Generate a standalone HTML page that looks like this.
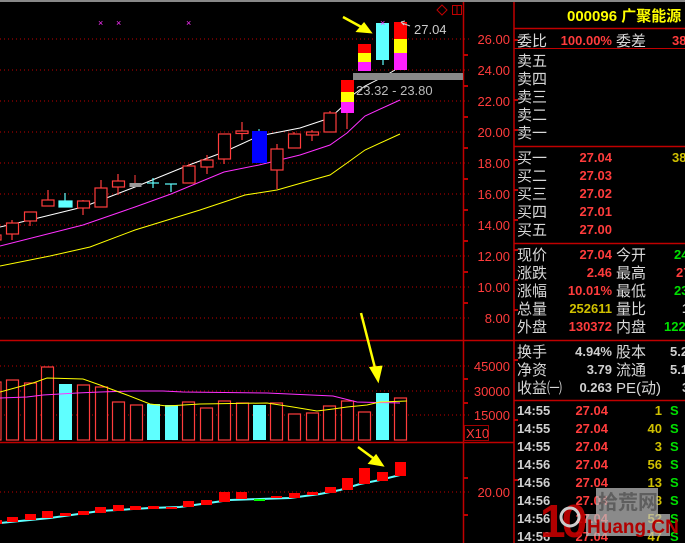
<!DOCTYPE html>
<html><head><meta charset="utf-8"><style>
html,body{margin:0;padding:0;background:#000;width:685px;height:543px;overflow:hidden}
svg{display:block}
.ax{font:13px "Liberation Sans",sans-serif;fill:#ff3c3c;text-anchor:end}
.l{font:15px "Liberation Sans","Noto Sans CJK SC",sans-serif;fill:#d8d8d8}
.n{font:bold 13px "Liberation Sans",sans-serif;text-anchor:end}
.t{font:bold 13px "Liberation Sans",sans-serif;fill:#d0d0d0}
</style></head><body>
<svg width="685" height="543" viewBox="0 0 685 543" xmlns="http://www.w3.org/2000/svg">
<rect width="685" height="543" fill="#000"/>
<line x1="0" y1="1" x2="685" y2="1" stroke="#888" stroke-width="2"/>
<!-- grid -->
<g stroke="#c00000" stroke-width="1" stroke-dasharray="1,3">
<line x1="0" y1="39" x2="470" y2="39"/><line x1="0" y1="70" x2="470" y2="70"/><line x1="0" y1="101" x2="470" y2="101"/><line x1="0" y1="132" x2="470" y2="132"/><line x1="0" y1="163" x2="470" y2="163"/><line x1="0" y1="194" x2="470" y2="194"/><line x1="0" y1="225" x2="470" y2="225"/><line x1="0" y1="256" x2="470" y2="256"/><line x1="0" y1="287" x2="470" y2="287"/><line x1="0" y1="318" x2="470" y2="318"/>
<line x1="0" y1="366" x2="470" y2="366"/><line x1="0" y1="391" x2="470" y2="391"/><line x1="0" y1="415" x2="470" y2="415"/>
<line x1="0" y1="492" x2="470" y2="492"/>
</g>
<!-- borders -->
<g stroke="#c00000" stroke-width="1.5">
<line x1="463.5" y1="2" x2="463.5" y2="543"/>
<line x1="514" y1="2" x2="514" y2="543"/>
<line x1="0" y1="340.5" x2="685" y2="340.5"/>
<line x1="0" y1="442.5" x2="514" y2="442.5"/>
<line x1="514" y1="28.5" x2="685" y2="28.5"/>
<line x1="514" y1="146.5" x2="685" y2="146.5"/>
<line x1="514" y1="243.5" x2="685" y2="243.5"/>
<line x1="514" y1="400.5" x2="685" y2="400.5"/>
</g>
<g stroke="#c00000">
<line x1="514" y1="48.5" x2="685" y2="48.5"/>
</g>
<g stroke="#c00000" stroke-width="2">
<line x1="463" y1="55" x2="468" y2="55"/><line x1="463" y1="86" x2="468" y2="86"/><line x1="463" y1="117" x2="468" y2="117"/><line x1="463" y1="148" x2="468" y2="148"/><line x1="463" y1="179" x2="468" y2="179"/><line x1="463" y1="210" x2="468" y2="210"/><line x1="463" y1="241" x2="468" y2="241"/><line x1="463" y1="272" x2="468" y2="272"/><line x1="463" y1="303" x2="468" y2="303"/>
<line x1="463" y1="379" x2="468" y2="379"/><line x1="463" y1="403" x2="468" y2="403"/>
<line x1="463" y1="478" x2="468" y2="478"/><line x1="463" y1="515" x2="468" y2="515"/>
<line x1="514" y1="40" x2="518" y2="40"/><line x1="514" y1="100" x2="518" y2="100"/><line x1="514" y1="130" x2="518" y2="130"/><line x1="514" y1="160" x2="518" y2="160"/><line x1="514" y1="190" x2="518" y2="190"/><line x1="514" y1="220" x2="518" y2="220"/><line x1="514" y1="250" x2="518" y2="250"/><line x1="514" y1="280" x2="518" y2="280"/><line x1="514" y1="310" x2="518" y2="310"/><line x1="514" y1="360" x2="518" y2="360"/><line x1="514" y1="420" x2="518" y2="420"/><line x1="514" y1="480" x2="518" y2="480"/>
</g>
<!-- axis labels -->
<g class="ax">
<text x="510" y="44">26.00</text><text x="510" y="75">24.00</text><text x="510" y="106">22.00</text><text x="510" y="137">20.00</text><text x="510" y="168">18.00</text><text x="510" y="199">16.00</text><text x="510" y="230">14.00</text><text x="510" y="261">12.00</text><text x="510" y="292">10.00</text><text x="510" y="323">8.00</text>
<text x="510" y="371">45000</text><text x="510" y="396">30000</text><text x="510" y="420">15000</text>
<text x="510" y="497">20.00</text>
</g>
<rect x="464.5" y="425.5" width="24" height="15" fill="none" stroke="#a00000"/>
<text x="466" y="438" style="font:13px 'Liberation Sans',sans-serif;fill:#ff3c3c">X10</text>
<!-- top icons -->
<path d="M442 5 L447 10 L442 15 L437 10 Z" fill="none" stroke="#c00000"/>
<rect x="452.5" y="5.5" width="9" height="9" fill="none" stroke="#c00000"/><line x1="457" y1="5" x2="457" y2="15" stroke="#c00000"/>
<!-- MAs -->
<polyline fill="none" stroke="#fff" points="0,227 30,220 83,207 135,187 189,165 224,152 259,136 300,128 318,122 330,118 342,107 350,97 365,86 383,77 395,70"/>
<polyline fill="none" stroke="#ff30ff" points="0,246 83,225 135,207 171,194 224,172 259,165 300,155 330,145 347,133 365,116 400,100"/>
<polyline fill="none" stroke="#ffff00" points="0,266 50,256 90,247 135,230 200,210 245,195 277,190 312,180 330,175 347,163 365,150 400,134"/>
<!-- candles -->
<g stroke="#ff3c3c" stroke-width="1.2" fill="#000">
<rect x="-5" y="235" width="6" height="5"/>
<line x1="12" y1="220" x2="12" y2="240"/><rect x="6.5" y="223" width="12" height="11"/>
<line x1="30" y1="212" x2="30" y2="226"/><rect x="24.5" y="212" width="12" height="9"/>
<line x1="48" y1="190" x2="48" y2="206"/><rect x="42" y="200" width="12" height="6"/>
<line x1="83" y1="200" x2="83" y2="215"/><rect x="77.5" y="201" width="12" height="7"/>
<line x1="101" y1="180" x2="101" y2="207"/><rect x="95" y="188" width="12" height="19"/>
<line x1="118" y1="174" x2="118" y2="195"/><rect x="112.5" y="181" width="12" height="6"/>
<line x1="189" y1="164" x2="189" y2="183"/><rect x="183" y="166" width="12" height="17"/>
<line x1="207" y1="155" x2="207" y2="174"/><rect x="201" y="160" width="12" height="7"/>
<line x1="224" y1="134" x2="224" y2="164"/><rect x="218.5" y="134" width="12" height="25"/>
<line x1="242" y1="122" x2="242" y2="140"/><rect x="236" y="131" width="12" height="2.5"/>
<line x1="277" y1="144" x2="277" y2="189"/><rect x="271" y="149" width="12" height="21"/>
<line x1="294" y1="132" x2="294" y2="148"/><rect x="288.5" y="134" width="12" height="14"/>
<line x1="312" y1="130" x2="312" y2="141"/><rect x="306.5" y="132" width="12" height="3"/>
<line x1="330" y1="111" x2="330" y2="132"/><rect x="324" y="113" width="12" height="19"/>
<line x1="347" y1="113" x2="347" y2="129"/>
</g>
<g stroke="#5fffff" stroke-width="1.2">
<line x1="65" y1="193" x2="65" y2="201"/><rect x="59" y="201" width="13" height="6" fill="#5fffff"/>
<line x1="147" y1="183" x2="159" y2="183"/><line x1="153" y1="178" x2="153" y2="188"/>
<line x1="165" y1="184" x2="177" y2="184"/><line x1="171" y1="184" x2="171" y2="192"/>
<line x1="383" y1="60" x2="383" y2="65"/>
</g>
<line x1="135" y1="175" x2="135" y2="183" stroke="#ff3c3c"/>
<rect x="129.5" y="183" width="12" height="4" fill="#999"/>
<rect x="252" y="131" width="15" height="32" fill="#0000ff"/>
<line x1="259" y1="129" x2="259" y2="131" stroke="#5fffff"/>
<!-- special candles -->
<rect x="341" y="80" width="13" height="12" fill="#ff0000"/><rect x="341" y="92" width="13" height="10" fill="#ffff00"/><rect x="341" y="102" width="13" height="11" fill="#ff20ff"/>
<rect x="358" y="44" width="13" height="9" fill="#ff0000"/><rect x="358" y="53" width="13" height="9" fill="#ffff00"/><rect x="358" y="62" width="13" height="9" fill="#ff20ff"/>
<rect x="376" y="23" width="13" height="37" fill="#5fffff"/>
<rect x="394" y="22" width="13" height="17" fill="#ff0000"/><rect x="394" y="39" width="13" height="14" fill="#ffff00"/><rect x="394" y="53" width="13" height="17" fill="#ff20ff"/>
<rect x="353" y="73" width="110" height="7" fill="#888"/>
<text x="356" y="95" style="font:13px 'Liberation Sans',sans-serif;fill:#bbb">23.32 - 23.80</text>
<text x="414" y="34" style="font:13px 'Liberation Sans',sans-serif;fill:#ccc">27.04</text>
<path d="M401 22 L404 25 M401 22 L405 21 M402 23 L410 26" stroke="#ccc" fill="none"/>
<g fill="#ff30ff" font-family="Liberation Sans" font-size="9"><text x="98" y="26">×</text><text x="116" y="26">×</text><text x="186" y="26">×</text><text x="380" y="26">×</text></g>
<!-- arrows -->
<g stroke="#ffff00" stroke-width="2.5" fill="#ffff00">
<line x1="343" y1="17" x2="365" y2="29"/><path d="M370 32 L358 31 L364 24 Z"/>
<line x1="361" y1="313" x2="376" y2="372"/><path d="M378 380 L371 368 L381 367 Z"/>
<line x1="358" y1="447" x2="377" y2="461"/><path d="M382 465 L370 463 L376 456 Z"/>
</g>
<!-- volume bars -->
<g stroke="#ff3c3c" stroke-width="1.2" fill="#000">
<rect x="-6" y="382" width="7" height="58"/>
<rect x="6.5" y="380" width="12" height="60"/><rect x="24.5" y="383" width="12" height="57"/><rect x="41.5" y="367" width="12" height="73"/>
<rect x="77.5" y="385" width="12" height="55"/><rect x="95.5" y="387" width="12" height="53"/><rect x="112.5" y="402" width="12" height="38"/><rect x="130.5" y="405" width="12" height="35"/>
<rect x="182.5" y="402" width="12" height="38"/><rect x="200.5" y="408" width="12" height="32"/><rect x="218.5" y="401" width="12" height="39"/><rect x="236.5" y="403" width="12" height="37"/>
<rect x="270.5" y="403" width="12" height="37"/><rect x="288.5" y="414" width="12" height="26"/><rect x="306.5" y="413" width="12" height="27"/><rect x="323.5" y="406" width="12" height="34"/><rect x="341.5" y="401" width="12" height="39"/><rect x="358.5" y="412" width="12" height="28"/><rect x="394.5" y="398" width="12" height="42"/>
</g>
<g fill="#5fffff"><rect x="59" y="384" width="13" height="56"/><rect x="147" y="404" width="13" height="36"/><rect x="165" y="405" width="13" height="35"/><rect x="253" y="405" width="13" height="35"/><rect x="376" y="393" width="13" height="47"/></g>
<polyline fill="none" stroke="#ff30ff" points="0,398 27,397 43,395 77,393 100,392 133,391 163,391 183,392 267,393 333,396 357,402 400,403"/>
<polyline fill="none" stroke="#ffff00" points="0,392 33,383 47,378 83,379 100,385 127,395 150,404 167,406 200,404 267,403 293,407 317,411 333,409 347,407 367,405 380,402 407,401"/>
<!-- lower panel -->
<polyline fill="none" stroke="#5fffff" stroke-width="2" points="0,523 50,518 100,511 150,508 180,507 230,500 260,499 290,498 320,494 340,490 360,484 380,480 400,475"/>
<g fill="#ff0000">
<rect x="-4" y="520" width="6" height="4"/><rect x="7" y="517" width="11" height="5"/><rect x="25" y="514" width="11" height="6"/><rect x="42" y="511" width="11" height="7"/><rect x="60" y="513" width="11" height="3"/><rect x="78" y="511" width="11" height="4"/><rect x="95" y="507" width="11" height="6"/><rect x="113" y="505" width="11" height="6"/><rect x="130" y="506" width="11" height="4"/><rect x="148" y="506" width="11" height="3"/><rect x="166" y="507" width="11" height="2"/><rect x="183" y="501" width="11" height="6"/><rect x="201" y="500" width="11" height="5"/><rect x="219" y="492" width="11" height="10"/><rect x="236" y="492" width="11" height="7"/><rect x="271" y="496" width="11" height="2"/><rect x="289" y="493" width="11" height="5"/><rect x="307" y="492" width="11" height="3"/><rect x="325" y="487" width="11" height="6"/><rect x="342" y="478" width="11" height="12"/><rect x="359" y="468" width="11" height="16"/><rect x="377" y="472" width="11" height="9"/><rect x="395" y="462" width="11" height="14"/>
</g>
<rect x="254" y="499" width="11" height="2" fill="#00ff00"/>
<!-- right panel -->
<text x="567" y="21" style="font:bold 15px 'Liberation Sans','Noto Sans CJK SC',sans-serif;fill:#ffff00">000096 广聚能源</text>
<g class="l">
<text x="517" y="46">委比</text><text x="616" y="46">委差</text>
<text x="517" y="66">卖五</text><text x="517" y="84">卖四</text><text x="517" y="102">卖三</text><text x="517" y="120">卖二</text><text x="517" y="138">卖一</text>
<text x="517" y="163">买一</text><text x="517" y="181">买二</text><text x="517" y="199">买三</text><text x="517" y="217">买四</text><text x="517" y="235">买五</text>
<text x="517" y="260">现价</text><text x="616" y="260">今开</text>
<text x="517" y="278">涨跌</text><text x="616" y="278">最高</text>
<text x="517" y="296">涨幅</text><text x="616" y="296">最低</text>
<text x="517" y="314">总量</text><text x="616" y="314">量比</text>
<text x="517" y="332">外盘</text><text x="616" y="332">内盘</text>
<text x="517" y="357">换手</text><text x="616" y="357">股本</text>
<text x="517" y="375">净资</text><text x="616" y="375">流通</text>
<text x="517" y="393">收益㈠</text><text x="616" y="393">PE(动)</text>
</g>
<g class="n" fill="#ff3c3c">
<text x="612" y="45">100.00%</text><text x="686" y="45" style="text-anchor:start" x="672">38</text>
<text x="612" y="162">27.04</text><text x="612" y="180">27.03</text><text x="612" y="198">27.02</text><text x="612" y="216">27.01</text><text x="612" y="234">27.00</text>
<text x="612" y="259">27.04</text><text x="612" y="277">2.46</text><text x="612" y="295">10.01%</text><text x="612" y="331">130372</text>
</g>
<g style="font:bold 13px 'Liberation Sans',sans-serif">
<text x="672" y="45" fill="#ff3c3c">38</text>
<text x="672" y="162" fill="#d0c000">38</text>
<text x="674" y="259" fill="#00e000">24</text>
<text x="676" y="277" fill="#ff3c3c">27</text>
<text x="674" y="295" fill="#00e000">23</text>
<text x="682" y="313" fill="#d0d0d0">1</text>
<text x="664" y="331" fill="#00e000">122</text>
<text x="670" y="356" fill="#d0d0d0">5.2</text>
<text x="670" y="374" fill="#d0d0d0">5.1</text>
<text x="682" y="392" fill="#d0d0d0">3</text>
</g>
<g class="n">
<text x="612" y="313" fill="#d0c000">252611</text>
<text x="612" y="356" fill="#d0d0d0">4.94%</text><text x="612" y="374" fill="#d0d0d0">3.79</text><text x="612" y="392" fill="#d0d0d0">0.263</text>
</g>
<g>
<text class="t" x="517" y="415">14:55</text><text class="n" x="608" y="415" fill="#ff3c3c">27.04</text><text class="n" x="662" y="415" fill="#d0c000">1</text><text class="t" x="670" y="415" fill="#00e000" style="fill:#00e000">S</text>
<text class="t" x="517" y="433">14:55</text><text class="n" x="608" y="433" fill="#ff3c3c">27.04</text><text class="n" x="662" y="433" fill="#d0c000">40</text><text class="t" x="670" y="433" style="fill:#00e000">S</text>
<text class="t" x="517" y="451">14:55</text><text class="n" x="608" y="451" fill="#ff3c3c">27.04</text><text class="n" x="662" y="451" fill="#d0c000">3</text><text class="t" x="670" y="451" style="fill:#00e000">S</text>
<text class="t" x="517" y="469">14:56</text><text class="n" x="608" y="469" fill="#ff3c3c">27.04</text><text class="n" x="662" y="469" fill="#d0c000">56</text><text class="t" x="670" y="469" style="fill:#00e000">S</text>
<text class="t" x="517" y="487">14:56</text><text class="n" x="608" y="487" fill="#ff3c3c">27.04</text><text class="n" x="662" y="487" fill="#d0c000">13</text><text class="t" x="670" y="487" style="fill:#00e000">S</text>
<text class="t" x="517" y="505">14:56</text><text class="n" x="608" y="505" fill="#ff3c3c">27.04</text><text class="n" x="662" y="505" fill="#d0c000">8</text><text class="t" x="670" y="505" style="fill:#00e000">S</text>
<text class="t" x="517" y="523">14:56</text><text class="n" x="608" y="523" fill="#ff3c3c">27.04</text><text class="n" x="662" y="523" fill="#d0c000">52</text><text class="t" x="670" y="523" style="fill:#00e000">S</text>
<text class="t" x="517" y="541">14:56</text><text class="n" x="608" y="541" fill="#ff3c3c">27.04</text><text class="n" x="662" y="541" fill="#d0c000">47</text><text class="t" x="670" y="541" style="fill:#00e000">S</text>
</g>
<!-- watermark -->
<g opacity="0.92">
<rect x="596" y="488" width="62" height="26" fill="#bbb" opacity="0.8"/>
<text x="598" y="509" style="font:bold 20px 'Noto Sans CJK SC',sans-serif;fill:#666">拾荒网</text>
<rect x="586" y="514" width="84" height="22" fill="#bbb" opacity="0.8"/>
<text x="587" y="533" style="font:bold 19px 'Liberation Sans',sans-serif;fill:#c00000">Huang.CN</text>
<text x="540" y="537" style="font:bold 46px 'Liberation Sans',sans-serif;fill:#c00000;letter-spacing:-4px">10</text>
<circle cx="570" cy="517" r="9" fill="none" stroke="#ddd" stroke-width="3"/>
</g>
</svg>
</body></html>
